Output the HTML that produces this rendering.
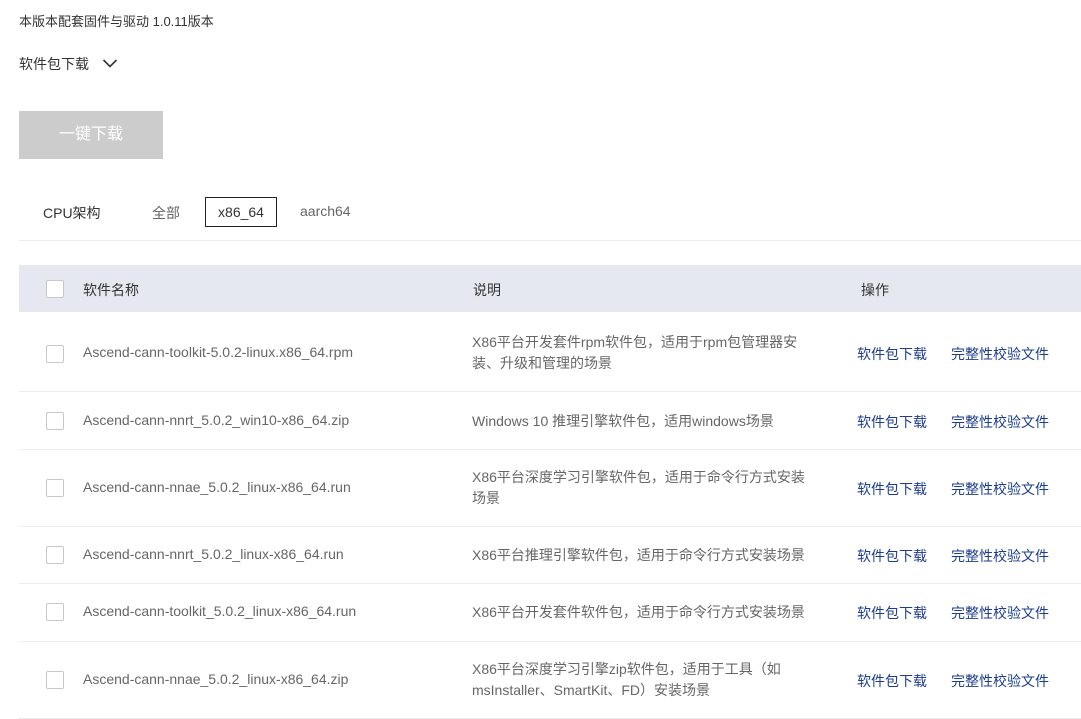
<!DOCTYPE html>
<html><head><meta charset="utf-8">
<style>
*{margin:0;padding:0;box-sizing:border-box}
body{width:1081px;height:719px;overflow:hidden;background:#fff;font-family:"Liberation Sans","Noto Sans CJK SC",sans-serif;font-size:14px;color:#333;position:relative}
.a{position:absolute;white-space:nowrap}
.cb{position:absolute;left:46px;width:18px;height:18px;border:1px solid #c8c8c8;border-radius:2px;background:#fff}
.nm{position:absolute;left:83px;color:#666;font-size:14px}
.ds{position:absolute;left:472px;color:#666;font-size:14px;line-height:21px;white-space:nowrap}
.l1{position:absolute;left:857px;color:#1c3c8f;font-size:14px}
.l2{position:absolute;left:951px;color:#1c3c8f;font-size:14px}
.ln{position:absolute;left:19px;right:0;height:1px;background:#ececec}
</style></head><body>
<div class="a" style="left:19px;top:11px;font-size:13px;color:#333">本版本配套固件与驱动 1.0.11版本</div>
<div class="a" style="left:19px;top:54px;font-size:14px;color:#333">软件包下载</div>
<svg class="a" style="left:102px;top:57px" width="16" height="12" viewBox="0 0 16 12"><path d="M1.5 3 L8 9.5 L14.5 3" fill="none" stroke="#333" stroke-width="1.6"/></svg>
<div class="a" style="left:19px;top:111px;width:144px;height:48px;background:#cccccc;color:#fff;font-size:16px;text-align:center;line-height:48px">一键下载</div>
<div class="a" style="left:43px;top:203px;color:#333">CPU架构</div>
<div class="a" style="left:152px;top:203px;color:#666">全部</div>
<div class="a" style="left:205px;top:197px;width:72px;height:30px;border:1px solid #222;text-align:center;line-height:28px;color:#333">x86_64</div>
<div class="a" style="left:300px;top:203px;color:#666">aarch64</div>
<div class="ln" style="top:240px"></div>
<div class="a" style="left:19px;top:265px;right:0;height:47px;background:#e5e8f0"></div>
<div class="cb" style="top:280px"></div>
<div class="a" style="left:83px;top:280px;color:#333">软件名称</div>
<div class="a" style="left:473px;top:280px;color:#333">说明</div>
<div class="a" style="left:861px;top:280px;color:#333">操作</div>

<div class="cb" style="top:345px"></div>
<div class="nm" style="top:344px">Ascend-cann-toolkit-5.0.2-linux.x86_64.rpm</div>
<div class="ds" style="top:332px">X86平台开发套件rpm软件包，适用于rpm包管理器安<br>装、升级和管理的场景</div>
<div class="l1" style="top:344px">软件包下载</div><div class="l2" style="top:344px">完整性校验文件</div>
<div class="ln" style="top:391px"></div>

<div class="cb" style="top:412px"></div>
<div class="nm" style="top:412px">Ascend-cann-nnrt_5.0.2_win10-x86_64.zip</div>
<div class="ds" style="top:411px">Windows 10 推理引擎软件包，适用windows场景</div>
<div class="l1" style="top:412px">软件包下载</div><div class="l2" style="top:412px">完整性校验文件</div>
<div class="ln" style="top:449px"></div>

<div class="cb" style="top:479px"></div>
<div class="nm" style="top:479px">Ascend-cann-nnae_5.0.2_linux-x86_64.run</div>
<div class="ds" style="top:467px">X86平台深度学习引擎软件包，适用于命令行方式安装<br>场景</div>
<div class="l1" style="top:479px">软件包下载</div><div class="l2" style="top:479px">完整性校验文件</div>
<div class="ln" style="top:526px"></div>

<div class="cb" style="top:546px"></div>
<div class="nm" style="top:546px">Ascend-cann-nnrt_5.0.2_linux-x86_64.run</div>
<div class="ds" style="top:545px">X86平台推理引擎软件包，适用于命令行方式安装场景</div>
<div class="l1" style="top:546px">软件包下载</div><div class="l2" style="top:546px">完整性校验文件</div>
<div class="ln" style="top:583px"></div>

<div class="cb" style="top:603px"></div>
<div class="nm" style="top:603px">Ascend-cann-toolkit_5.0.2_linux-x86_64.run</div>
<div class="ds" style="top:602px">X86平台开发套件软件包，适用于命令行方式安装场景</div>
<div class="l1" style="top:603px">软件包下载</div><div class="l2" style="top:603px">完整性校验文件</div>
<div class="ln" style="top:641px"></div>

<div class="cb" style="top:671px"></div>
<div class="nm" style="top:671px">Ascend-cann-nnae_5.0.2_linux-x86_64.zip</div>
<div class="ds" style="top:659px">X86平台深度学习引擎zip软件包，适用于工具（如<br>msInstaller、SmartKit、FD）安装场景</div>
<div class="l1" style="top:671px">软件包下载</div><div class="l2" style="top:671px">完整性校验文件</div>
<div class="ln" style="top:718px"></div>
</body></html>
